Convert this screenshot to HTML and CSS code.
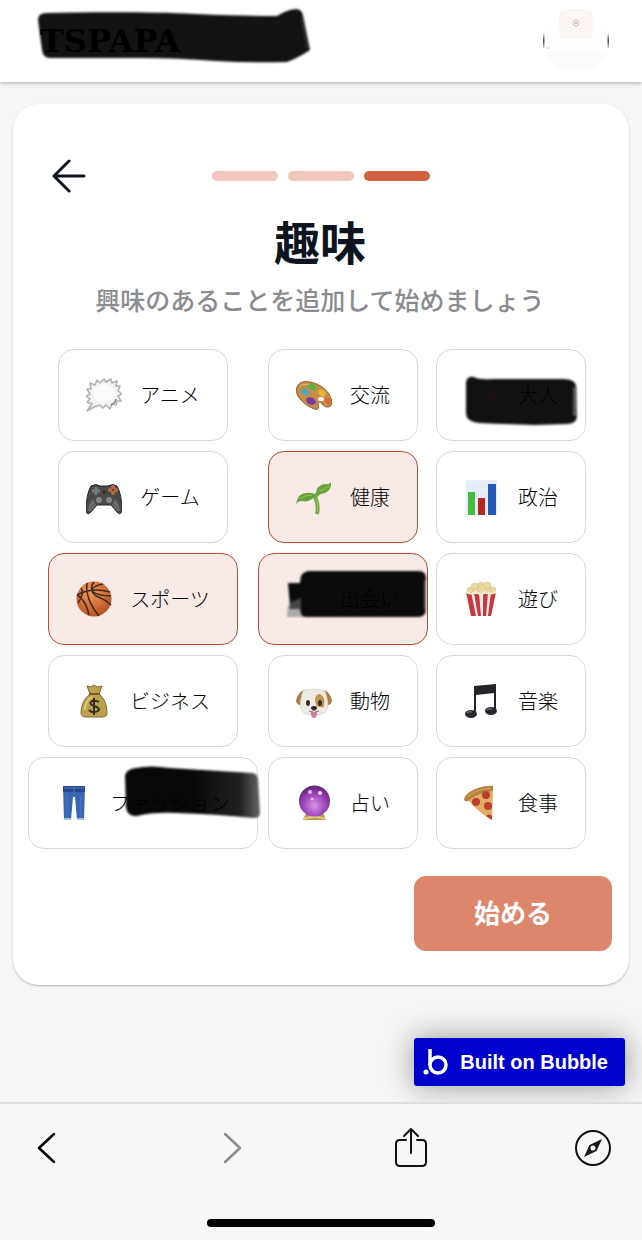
FILE: index.html
```html
<!DOCTYPE html>
<html lang="ja">
<head>
    <meta charset="UTF-8">
    <meta name="viewport" content="width=device-width, initial-scale=1.0">
    <title>趣味</title>
    <link rel="stylesheet" href="styles.css">
</head>
<body>
    <header class="header">
        <a class="logo" href="#">
            <svg class="scribble logo-scribble" viewBox="0 0 276 56" aria-hidden="true">
                <path d="M2 12Q2 5 10 5C60 4 120 4 160 6Q205 8 241 8Q250 2 260 1Q266 1 267 8L274 42Q262 50 251 54Q215 55 180 53Q140 50 110 50H14Q7 50 6 42Z" fill="#121212"/>
                <path d="M266 10L272 40" stroke="#2c2c2c" stroke-width="3" fill="none"/>
            </svg>
            <span class="logo-text">TSPAPA</span>
        </a>
        <svg class="avatar" viewBox="0 0 66 66" role="img" aria-label="プロフィール">
            <clipPath id="avatar-clip"><circle cx="33" cy="33" r="33"/></clipPath>
            <g clip-path="url(#avatar-clip)">
                <rect width="66" height="66" fill="#fefefe"/>
                <rect y="43" width="66" height="18" fill="#fbfbfe"/>
                <rect x="17" y="2" width="32" height="28" rx="3" fill="#fcf7f5" stroke="#f7efed"/>
                <circle cx="33" cy="15" r="3" fill="none" stroke="#d5b8ac"/>
                <circle cx="33" cy="15" r="1" fill="#b98f80"/>
                <path d="M0 20Q3 33 0 46ZM66 20Q63 33 66 46Z" fill="#4c3d36"/>
                <path d="M4 40h3" stroke="#ccc"/>
            </g>
        </svg>
    </header>

    <main class="page">
        <section class="card">
            <div class="steps">
                <button class="back" aria-label="戻る">
                    <svg viewBox="0 0 34 34" fill="none" stroke="#0f1520" stroke-width="3" stroke-linecap="round" stroke-linejoin="round"><path d="M32 17H2M17 2L2 17L17 32"/></svg>
                </button>
                <div class="progress">
                    <span class="step"></span>
                    <span class="step"></span>
                    <span class="step active"></span>
                </div>
            </div>

            <h1 class="title">趣味</h1>
            <p class="subtitle">興味のあることを追加して始めましょう</p>

            <div class="interests">
                <button class="interest" aria-pressed="false">
                    <svg class="icon" viewBox="0 0 36 36">
                        <path d="M1 34L6 27L1 25L4 22L0 19L4 17L1 12L5 12L4 6L9 8L11 3L14 6L18 2L20 5L25 2L26 6L31 4L30 9L34 9L32 14L36 17L32 19L35 24L31 24L30 28L26 27L24 32L20 28L17 31L14 28L10 29Z" fill="#f2f3f4" stroke="#b0b0b0" stroke-width="1.5" stroke-linejoin="round"/>
                        <ellipse cx="18" cy="16" rx="11" ry="9" fill="#fafbfc"/>
                        <path d="M25 28L29 25L30 22" stroke="#888" stroke-width="1.5" fill="none"/>
                    </svg>
                    <span>アニメ</span>
                </button>
                <button class="interest" aria-pressed="false">
                    <svg class="icon" viewBox="0 0 36 36">
                        <path d="M1 10Q4 3 14 5Q26 7 33 17Q39 27 33 30Q29 31 26 27Q23 23 22 27Q24 34 18 32Q10 29 4 22Q-1 16 1 10Z" fill="#c68e48" stroke="#91612d"/>
                        <path d="M4 9Q9 6 17 8" stroke="#e4ba78" fill="none"/>
                        <ellipse cx="9" cy="15" rx="4" ry="3" transform="rotate(35 9 15)" fill="#45a9c8"/>
                        <ellipse cx="16" cy="10" rx="4" ry="3" transform="rotate(30 16 10)" fill="#55b749"/>
                        <ellipse cx="26" cy="16" rx="4" ry="3" transform="rotate(35 26 16)" fill="#e6b82f"/>
                        <ellipse cx="32" cy="24" rx="2.5" ry="4" transform="rotate(-35 32 24)" fill="#dc6641"/>
                        <ellipse cx="15" cy="24" rx="5" ry="3.5" transform="rotate(25 15 24)" fill="#7a35a4"/>
                        <ellipse cx="25" cy="22" rx="3" ry="2" fill="#fff"/>
                    </svg>
                    <span>交流</span>
                </button>
                <button class="interest" aria-pressed="false">
                    <svg class="scribble adult-scribble" viewBox="0 0 116 52" aria-hidden="true">
                        <path d="M3 7Q4 1 11 2Q16 5 30 4L100 4Q113 4 113 12L114 42Q113 49 104 49L72 50Q40 49 16 48Q4 47 3 39Z" fill="#111"/>
                        <path d="M20 15L32 18L30 22M22 25L34 24" stroke="#241212" stroke-width="2" fill="none"/>
                        <path d="M112 12V41" stroke="#777" stroke-width="4" opacity=".7"/>
                    </svg>
                    <span class="icon"></span>
                    <span>大人</span>
                </button>

                <button class="interest" aria-pressed="false">
                    <svg class="icon" viewBox="0 0 36 36">
                        <path d="M5 7Q10 4 14 7H22Q27 4 31 7Q36 16 36 32Q34 37 31 33L25 26H11L5 33Q1 37 0 32Q0 16 5 7Z" fill="#484b47" stroke="#252725"/>
                        <path d="M2 32Q3 24 7 20L10 26L5 32ZM34 32Q33 24 29 20L26 26L31 32Z" fill="#666a66"/>
                        <path d="M10 8v8M6 12h8" stroke="#777b77" stroke-width="3"/>
                        <g fill="#c66a3c"><circle cx="27" cy="8" r="2"/><circle cx="24" cy="11" r="2"/><circle cx="30" cy="11" r="2"/><circle cx="27" cy="14" r="2"/></g>
                        <circle cx="13" cy="21" r="3" fill="#858885"/><circle cx="23" cy="21" r="3" fill="#858885"/>
                        <circle cx="18" cy="13" r="1.5" fill="#302626"/>
                    </svg>
                    <span>ゲーム</span>
                </button>
                <button class="interest selected" aria-pressed="true">
                    <svg class="icon" viewBox="0 0 36 36">
                        <path d="M21 35Q23 25 19 18Q21 15 24 13" stroke="#72a942" stroke-width="4" fill="none"/>
                        <path d="M0 25Q2 14 10 14Q16 13 20 16Q14 24 6 22Q2 22 0 25Z" fill="#65a137"/>
                        <path d="M20 15Q20 7 28 5Q33 6 35 3Q36 16 20 15Z" fill="#69a438"/>
                        <path d="M3 20Q8 16 16 16M23 12Q28 11 33 7" stroke="#93c45b" fill="none"/>
                        <path d="M20 20Q23 25 21 33" stroke="#a1cc6d" fill="none"/>
                    </svg>
                    <span>健康</span>
                </button>
                <button class="interest" aria-pressed="false">
                    <svg class="icon" viewBox="0 0 36 36">
                        <rect x="2" y="1" width="31" height="35" fill="#e7eefa"/>
                        <path d="M2 8H33M2 15H33M2 22H33M2 29H33" stroke="#dde6f4"/>
                        <rect x="4" y="13" width="7" height="23" fill="#46bd3d"/>
                        <rect x="14" y="19" width="7" height="17" fill="#b52821"/>
                        <rect x="24" y="5" width="8" height="31" fill="#2557b6"/>
                    </svg>
                    <span>政治</span>
                </button>

                <button class="interest selected" aria-pressed="true">
                    <svg class="icon" viewBox="0 0 36 36">
                        <defs><radialGradient id="ball" cx=".4" cy=".3" r=".7"><stop stop-color="#f09a5e"/><stop offset="1" stop-color="#b95323"/></radialGradient></defs>
                        <circle cx="18" cy="18" r="17.5" fill="url(#ball)"/>
                        <path d="M1 14Q16 6 34 11M18 1Q12 9 20 15Q30 19 35 24M11 2Q9 18 23 35M2 22Q9 12 5 7M1 14Q10 19 13 34M27 3Q16 5 16 10Q22 15 35 15" stroke="#46281b" stroke-width="1.5" fill="none"/>
                    </svg>
                    <span>スポーツ</span>
                </button>
                <button class="interest selected" aria-pressed="true">
                    <svg class="scribble dating-scribble" viewBox="0 0 142 52" aria-hidden="true">
                        <path d="M2 35H20V47H1Z" fill="#aaa"/>
                        <path d="M2 13H14Q14 2 22 1H134Q140 2 140 8V39Q140 47 132 47H20Q14 47 14 37L4 36Z" fill="#0b0b0b"/>
                        <path d="M5 32L15 28V39H3Z" fill="#444"/>
                        <path d="M139 10V40" stroke="#555" stroke-width="2"/>
                    </svg>
                    <span class="icon"></span>
                    <span>出会い</span>
                </button>
                <button class="interest" aria-pressed="false">
                    <svg class="icon" viewBox="0 0 36 36">
                        <path d="M2 11H32L27 35H7Z" fill="#faf0ed"/>
                        <path d="M2 11H7L12 35H7ZM10 12H15L17 35H14ZM19 12H24L22 35H19ZM27 11H32L27 35H24Z" fill="#c7373d"/>
                        <g fill="#ead9a4" stroke="#d3ba7b" stroke-width=".5"><circle cx="6" cy="9" r="3"/><circle cx="11" cy="6" r="4"/><circle cx="17" cy="4" r="3"/><circle cx="23" cy="5" r="4"/><circle cx="29" cy="9" r="3"/><circle cx="12" cy="10" r="3"/><circle cx="18" cy="8" r="4"/><circle cx="24" cy="10" r="3"/></g>
                        <path d="M2 11Q8 14 12 11Q17 15 21 11Q26 14 32 11" stroke="#f8e8c7" stroke-width="2" fill="none"/>
                    </svg>
                    <span>遊び</span>
                </button>

                <button class="interest" aria-pressed="false">
                    <svg class="icon" viewBox="0 0 36 36">
                        <path d="M11 3L15 4L18 2L21 4L26 3L23 11Q31 17 31 30Q31 34 26 34H10Q5 34 5 30Q5 18 14 11Z" fill="#bba04e" stroke="#806b2d"/>
                        <path d="M13 11H24" stroke="#756027" stroke-width="2"/>
                        <path d="M9 27Q9 18 16 14" stroke="#e1cd7b" stroke-width="2" fill="none"/>
                        <path d="M18 15V32M23 19Q20 17 16 18Q12 21 18 23Q25 25 22 28Q17 31 13 27" stroke="#332d1b" stroke-width="2" fill="none"/>
                    </svg>
                    <span>ビジネス</span>
                </button>
                <button class="interest" aria-pressed="false">
                    <svg class="icon" viewBox="0 0 36 36">
                        <path d="M9 7Q2 8 0 18Q2 24 7 21ZM27 7Q34 8 36 18Q34 24 29 21Z" fill="#a97c43"/>
                        <path d="M7 8Q18 4 29 8Q35 25 28 30Q18 34 8 30Q1 25 7 8Z" fill="#eeeae4" stroke="#d0cbc4" stroke-width=".7"/>
                        <path d="M19 17Q19 11 24 11Q30 14 28 24Q19 26 19 17Z" fill="#c7924d"/>
                        <ellipse cx="12" cy="20" rx="2" ry="3" fill="#332c28"/><ellipse cx="24" cy="20" rx="2" ry="3" fill="#332c28"/>
                        <path d="M15 29Q15 35 18 35Q21 35 21 29Z" fill="#df739c"/>
                        <ellipse cx="18" cy="25" rx="3" ry="2" fill="#2c2928"/>
                        <path d="M13 28Q16 30 18 27Q20 30 23 28" stroke="#776a62" fill="none"/>
                    </svg>
                    <span>動物</span>
                </button>
                <button class="interest" aria-pressed="false">
                    <svg class="icon" viewBox="0 0 36 36">
                        <path d="M10 3L32 1V29H30V10L12 12V31H10Z" fill="#242328"/>
                        <ellipse cx="7" cy="31" rx="6" ry="4" fill="#25282d"/><ellipse cx="27" cy="28" rx="6" ry="4" fill="#25282d"/>
                        <path d="M3 30Q5 28 8 29M23 27Q25 25 28 26" stroke="#89919a" fill="none"/>
                    </svg>
                    <span>音楽</span>
                </button>

                <button class="interest" aria-pressed="false">
                    <svg class="scribble fashion-scribble" viewBox="0 0 140 56" aria-hidden="true">
                        <defs><linearGradient id="brush"><stop offset=".5" stop-color="#080808"/><stop offset=".85" stop-color="#202020"/><stop offset="1" stop-color="#666"/></linearGradient></defs>
                        <path d="M3 10Q5 4 14 3Q28 0 48 3L130 8Q135 8 136 14L138 48Q138 53 132 53Q92 49 55 48Q30 47 15 51Q6 52 4 43Z" fill="url(#brush)"/>
                    </svg>
                    <svg class="icon" viewBox="0 0 36 36">
                        <path d="M7 1H29L28 35H21L19 12H17L15 35H8Z" fill="#3765b1"/>
                        <path d="M7 1H29V7H7Z" fill="#28468d"/>
                        <path d="M8 3H28M18 2V12M11 10V33M25 10V33" stroke="#5078bd" fill="none"/>
                        <path d="M8 34H15M21 34H28" stroke="#a6bedc" stroke-width="2"/>
                    </svg>
                    <span>ファッション</span>
                </button>
                <button class="interest" aria-pressed="false">
                    <svg class="icon" viewBox="0 0 36 36">
                        <defs><radialGradient id="crystal" cx=".5" cy=".65" r=".6"><stop stop-color="#d797e4"/><stop offset=".55" stop-color="#a34ac2"/><stop offset="1" stop-color="#6c267f"/></radialGradient></defs>
                        <path d="M10 28H27L30 35H7Z" fill="#b8954a"/>
                        <path d="M7 34Q18 30 30 34" stroke="#e5ca83" stroke-width="2" fill="none"/>
                        <circle cx="18.5" cy="16" r="15.5" fill="url(#crystal)"/>
                        <circle cx="14" cy="7" r="2" fill="#e4bdec"/><circle cx="24" cy="8" r="2" fill="#f0d7f4"/><circle cx="16" cy="14" r="1.5" fill="#e9b8ef"/>
                    </svg>
                    <span>占い</span>
                </button>
                <button class="interest" aria-pressed="false">
                    <svg class="icon" viewBox="0 0 36 36">
                        <path d="M4 15Q17 4 29 4L28 35Q15 28 4 15Z" fill="#e4ac65"/>
                        <path d="M0 14Q2 7 14 3Q23 0 29 1V6Q15 7 4 16Q0 17 0 14Z" fill="#b7833f"/>
                        <path d="M3 12Q13 4 27 3" stroke="#d2a560" fill="none"/>
                        <g fill="#b93f2c"><circle cx="22" cy="10" r="4"/><circle cx="12" cy="17" r="4"/><circle cx="24" cy="21" r="4"/><path d="M22 31Q25 28 28 31V35Z"/></g>
                    </svg>
                    <span>食事</span>
                </button>
            </div>

            <button class="start">始める</button>
        </section>

        <a class="bubble-badge" href="#">
            <svg class="bubble-icon" viewBox="0 0 26 28" aria-hidden="true">
                <circle cx="3" cy="24" r="2.5" fill="#fff"/>
                <circle cx="15" cy="17" r="8" fill="none" stroke="#fff" stroke-width="3.5"/>
                <path d="M7 1V17" stroke="#fff" stroke-width="3.5"/>
            </svg>
            <span>Built on Bubble</span>
        </a>
    </main>

    <footer class="toolbar">
        <nav class="tools">
            <button class="tool" aria-label="前のページ">
                <svg viewBox="0 0 40 40" fill="none" stroke="#000" stroke-width="2.5" stroke-linecap="round" stroke-linejoin="round"><path d="M26 6L11 20L26 34"/></svg>
            </button>
            <button class="tool" aria-label="次のページ">
                <svg viewBox="0 0 40 40" fill="none" stroke="#8c8c8c" stroke-width="2.5" stroke-linecap="round" stroke-linejoin="round"><path d="M15 6L30 20L15 34"/></svg>
            </button>
            <button class="tool" aria-label="共有">
                <svg viewBox="0 0 40 40" fill="none" stroke="#111" stroke-width="2" stroke-linecap="round" stroke-linejoin="round"><path d="M14 12H8Q4 12 4 16V34Q4 38 8 38H30Q34 38 34 34V16Q34 12 30 12H25M19 25V1M12 8L19 1L26 8"/></svg>
            </button>
            <button class="tool" aria-label="Safariで開く">
                <svg viewBox="0 0 40 40"><circle cx="19" cy="20" r="17" fill="none" stroke="#111" stroke-width="2"/><path d="M28 11L22.500 23L10 29L15.500 17Z" fill="#16171c"/><circle cx="19" cy="20" r="2.500" fill="#f7f7f7"/></svg>
            </button>
        </nav>
        <div class="home-indicator"></div>
    </footer>
</body>
</html>
```

FILE: styles.css
```css
* {
    box-sizing: border-box;
}
body {
    margin: 0;
    min-height: 100vh;
    display: flex;
    flex-direction: column;
    font-family: "Noto Sans CJK JP", sans-serif;
    background-color: #f6f6f6;
    color: #0f1520;
}
button {
    font-family: inherit;
    border: none;
    padding: 0;
    background: none;
    cursor: pointer;
}
svg {
    display: block;
}

/* Header */
.header {
    display: flex;
    align-items: center;
    justify-content: space-between;
    height: 82px;
    padding: 0 33px 0 40px;
    background: #fff;
    box-shadow: 0 1px 4px rgba(0, 0, 0, 0.3);
}
.logo {
    position: relative;
    color: #000;
    text-decoration: none;
}
.logo-text {
    position: relative;
    font: bold 32px/40px "DejaVu Serif", serif;
}
.avatar {
    width: 66px;
    height: 66px;
}

/* Brush strokes painted over names */
.scribble {
    position: absolute;
    filter: blur(1px);
    pointer-events: none;
}
.logo-scribble {
    left: -4px;
    top: -13px;
    width: 276px;
}
.adult-scribble {
    left: 26px;
    top: 25px;
    width: 116px;
}
.dating-scribble {
    left: 27px;
    top: 16px;
    width: 142px;
}
.fashion-scribble {
    left: 93px;
    top: 7px;
    width: 140px;
}

/* Card */
.page {
    flex: 1;
    display: flex;
    flex-direction: column;
    padding: 22px 13px 16px;
}
.card {
    display: flex;
    flex-direction: column;
    padding: 52px 17px 34px 15px;
    background: #fff;
    border-radius: 26px;
    box-shadow: 0 1px 2px rgba(0, 0, 0, 0.25);
}
.steps {
    display: grid;
    grid-template-columns: 1fr auto 1fr;
    align-items: center;
    padding: 0 22px 0 24px;
}
.back {
    width: 34px;
    height: 40px;
}
.progress {
    display: flex;
    gap: 10px;
}
.step {
    width: 66px;
    height: 10px;
    border-radius: 5px;
    background: #eec8be;
}
.step.active {
    background: #d26140;
}
.title {
    margin: 14px 0 0;
    font-size: 46px;
    line-height: 60px;
    font-weight: 700;
    text-align: center;
}
.subtitle {
    margin: 11px 0 0;
    font-size: 25px;
    line-height: 36px;
    font-weight: 500;
    text-align: center;
    color: #8b8c90;
}

/* Interests */
.interests {
    display: grid;
    grid-template-columns: repeat(3, auto);
    justify-content: start;
    justify-items: center;
    row-gap: 10px;
    margin-top: 32px;
}
.interest {
    position: relative;
    display: flex;
    align-items: center;
    gap: 18px;
    height: 92px;
    padding: 0 27px;
    border: 1px solid #d9d9db;
    border-radius: 16px;
    background: #fff;
    font-size: 20px;
    line-height: 30px;
    font-weight: 300;
    color: #000;
}
.interest:nth-child(3n) {
    margin-left: 8px;
}
.interest.selected {
    border-color: #b5502f;
    background: #f8eae7;
}
.interest span {
    position: relative;
}
.icon {
    width: 36px;
    height: 36px;
}

.start {
    align-self: flex-end;
    width: 198px;
    height: 75px;
    margin-top: 27px;
    padding-bottom: 4px;
    border-radius: 12px;
    background: #dc866b;
    color: #fff;
    font-size: 26px;
    font-weight: 700;
}

/* Badge */
.bubble-badge {
    align-self: flex-end;
    display: flex;
    align-items: center;
    gap: 11px;
    height: 48px;
    margin: 53px 4px 0 0;
    padding: 0 17px 0 9px;
    border-radius: 3px;
    background: #0000cc;
    box-shadow: 0 0 30px rgba(0, 0, 0, 0.4);
    color: #fff;
    font: bold 20px "Liberation Sans", Arial, sans-serif;
    text-decoration: none;
}
.bubble-icon {
    width: 26px;
    height: 28px;
}

/* Browser toolbar */
.toolbar {
    position: relative;
    padding: 24px 28px 13px;
    border-top: 2px solid #dfdfdf;
    background: #f7f7f7;
}
.tools {
    display: flex;
    justify-content: space-between;
}
.tool {
    width: 40px;
    height: 40px;
}
.home-indicator {
    width: 228px;
    height: 8px;
    margin: 51px auto 0;
    border-radius: 4px;
    background: #000;
}
```
